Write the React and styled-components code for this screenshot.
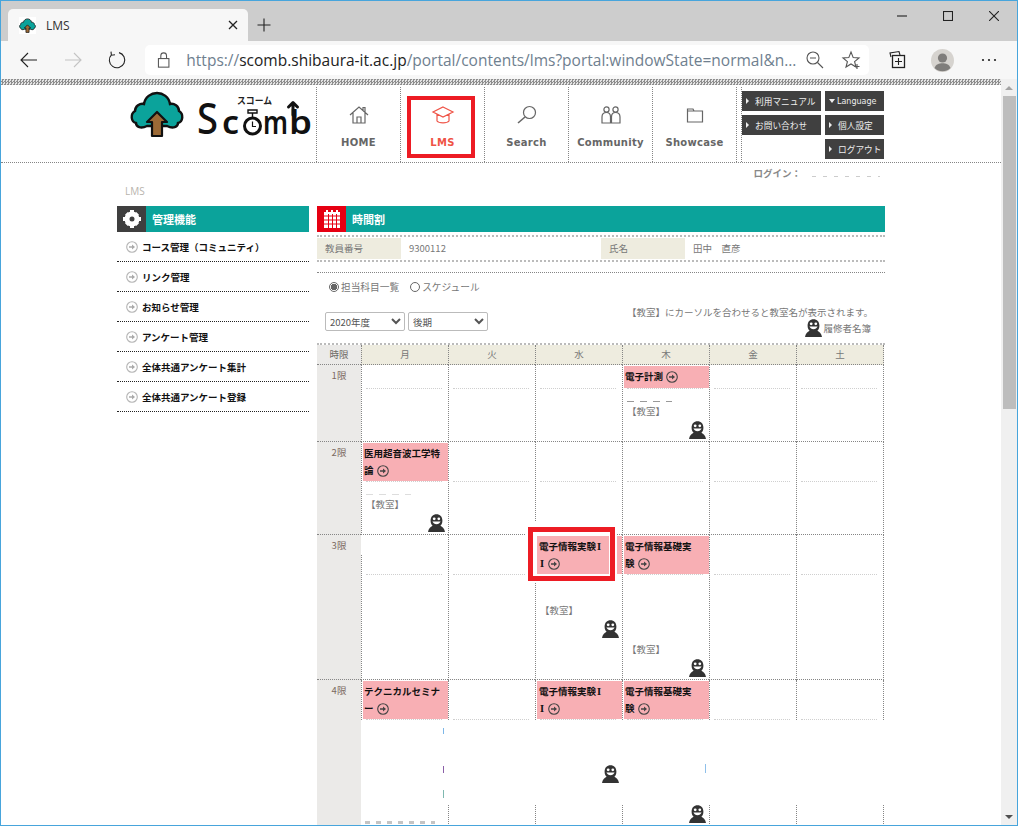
import React from "react";
import styled, { createGlobalStyle } from "styled-components";

const TEAL = "#0ba39b";
const JP = `"Noto Sans CJK JP", "Noto Sans", sans-serif`;
const GRID_LINE = "1px dotted #858585";

const GlobalStyle = createGlobalStyle`
  html, body {
    margin: 0;
    padding: 0;
    height: 100%;
    overflow: hidden;
    background: #fff;
    font-family: ${JP};
  }
`;

const Win = styled.div`
  box-sizing: border-box;
  width: 1018px;
  height: 826px;
  border: 1px solid #47a5dc;
  display: flex;
  flex-direction: column;
  overflow: hidden;
  background: #fff;
`;

/* browser chrome */
const TabStrip = styled.div`
  height: 40px;
  flex: none;
  background: #cdcdcd;
  display: flex;
  align-items: flex-end;
  padding-left: 7px;
`;

const Tab = styled.div`
  width: 240px;
  height: 32px;
  box-sizing: border-box;
  background: #f7f7f7;
  border-radius: 5px 5px 0 0;
  display: flex;
  align-items: center;
  padding: 0 10px 0 11px;
  font: 12px "Open Sans", "Noto Sans", sans-serif;
  color: #333;
`;

const TabTitle = styled.span`
  flex: 1;
  margin-left: 10px;
`;

const NewTab = styled.div`
  width: 30px;
  height: 32px;
  margin-left: 1px;
  display: flex;
  align-items: center;
  justify-content: center;
`;

const WinControls = styled.div`
  margin-left: auto;
  align-self: stretch;
  display: flex;
`;

const WinButton = styled.div`
  width: 46px;
  height: 29px;
  display: flex;
  align-items: center;
  justify-content: center;
`;

const Toolbar = styled.div`
  height: 38px;
  flex: none;
  box-sizing: border-box;
  background: #f7f7f7;
  display: flex;
  align-items: center;
  padding: 0 7px 0 6px;
`;

const ToolButton = styled.div`
  width: 44px;
  height: 30px;
  flex: none;
  display: flex;
  align-items: center;
  justify-content: center;
`;

const MoreDots = styled.svg`
  display: block;
  margin-left: 6px;
`;

const AddressBar = styled.div`
  width: 724px;
  height: 30px;
  flex: none;
  margin-left: 6px;
  margin-right: 7px;
  background: #fff;
  border-radius: 5px;
  display: flex;
  align-items: center;
  padding-left: 12px;
  box-sizing: border-box;
`;

const Url = styled.div`
  width: 641px;
  margin-left: 16px;
  font: 15.5px "Open Sans", "Noto Sans", sans-serif;
  color: #6f7f8f;
  white-space: nowrap;
  overflow: hidden;

  b {
    font-weight: 400;
    color: #222;
  }
`;

const AddressIcon = styled.div`
  width: 36px;
  flex: none;
  display: flex;
  justify-content: center;
  align-items: center;
`;

const Viewport = styled.div`
  flex: 1;
  min-height: 0;
  display: flex;
`;

const Main = styled.div`
  width: 1000px;
  flex: none;
  overflow: hidden;
`;

const Scrollbar = styled.div`
  width: 16px;
  flex: none;
  background: #f0f0f0;
  display: flex;
  flex-direction: column;
  align-items: center;
`;

const ScrollArrow = styled.div`
  height: 17px;
  flex: none;
  display: flex;
  align-items: center;
  justify-content: center;
  font-size: 0;
  &::before {
    content: "";
    border-left: 4px solid transparent;
    border-right: 4px solid transparent;
    ${(p) => (p.$down ? "border-top: 4px solid #505050;" : "border-bottom: 4px solid #a3a3a3;")}
  }
`;

const ScrollThumb = styled.div`
  width: 13px;
  height: 313px;
  background: #bdbdbd;
  margin-bottom: auto;
`;

/* site header */
const DotStrip = styled.div`
  height: 6px;
  background: repeating-conic-gradient(#8e8e8e 0 25%, #e4e4e4 0 50%) 0 0 / 3px 3px;
`;

const SiteHeader = styled.header`
  height: 78px;
  padding-top: 2px;
  box-sizing: border-box;
  border-bottom: ${GRID_LINE};
`;

const Inner = styled.div`
  width: 768px;
  margin: 0 auto;
`;

const HeaderRow = styled(Inner)`
  height: 75px;
  display: flex;
`;

const LogoBox = styled.div`
  width: 199px;
  flex: none;
  padding: 2px 0 0 13px;
  box-sizing: border-box;
`;

const NavCell = styled.div`
  width: 84px;
  flex: none;
  box-sizing: border-box;
  border-left: ${GRID_LINE};
  position: relative;
  display: flex;
  flex-direction: column;
  align-items: center;
  padding-top: 16px;
`;

const NavLabel = styled.div`
  margin-top: 10px;
  font: bold 10px "DejaVu Sans", sans-serif;
  letter-spacing: 0.3px;
  color: ${(p) => (p.$active ? "#ef5346" : "#666")};
`;

const Callout = styled.div`
  position: absolute;
  left: 6px;
  top: 9px;
  width: 68px;
  height: 62px;
  box-sizing: border-box;
  border: 4px solid #ed1c24;
`;

const Gap = styled.div`
  width: 5px;
  flex: none;
  box-sizing: border-box;
  border-left: ${GRID_LINE};
`;

const LinkPanel = styled.div`
  flex: 1;
  box-sizing: border-box;
  border-left: ${GRID_LINE};
  display: grid;
  grid-template-columns: 79px 59px;
  grid-auto-rows: 20px;
  column-gap: 4px;
  row-gap: 4px;
  padding-top: 4px;
`;

const LinkButton = styled.div`
  grid-column: ${(p) => p.$col};
  background: #404040;
  color: #eee;
  display: flex;
  align-items: center;
  padding-left: 4px;
  font: ${(p) => (p.$latin ? `8px "DejaVu Sans", sans-serif` : `8.7px ${JP}`)};
  white-space: nowrap;
  overflow: hidden;

  &::before {
    content: "";
    flex: none;
    margin-right: ${(p) => (p.$down ? "2px" : "6px")};
    ${(p) =>
      p.$down
        ? "border-left: 3px solid transparent; border-right: 3px solid transparent; border-top: 4px solid #eee;"
        : "border-top: 3px solid transparent; border-bottom: 3px solid transparent; border-left: 3px solid #eee;"}
  }
`;

const LoginRow = styled(Inner)`
  height: 20px;
  display: flex;
  align-items: center;
  justify-content: flex-end;
  padding-right: 5px;
  box-sizing: border-box;
`;

const LoginLabel = styled.span`
  font: bold 9.5px ${JP};
  color: #888;
`;

const LoginScrap = styled.span`
  width: 68px;
  height: 1px;
  margin: 6px 0 0 11px;
  background: repeating-linear-gradient(90deg, #ccc 0 4px, #fff 4px 11px);
`;

const Crumb = styled(Inner)`
  height: 16px;
  padding-left: 8px;
  box-sizing: border-box;
  font: 10px/16px "Open Sans", sans-serif;
  color: #b8b4ae;
`;

const Columns = styled(Inner)`
  display: flex;
  gap: 8px;
  margin-top: 7px;
`;

/* left menu */
const Sidebar = styled.aside`
  width: 192px;
  flex: none;
`;

const TitleBar = styled.div`
  height: 26px;
  background: ${TEAL};
  display: flex;
  align-items: center;
  color: #fff;
  font: bold 11px ${JP};
`;

const TitleIcon = styled.div`
  width: 29px;
  height: 26px;
  flex: none;
  margin-right: 6px;
  background: ${(p) => p.$bg};
  display: flex;
  align-items: center;
  justify-content: center;
`;

const MenuItem = styled.div`
  height: 30px;
  box-sizing: border-box;
  border-bottom: 1px dotted #222;
  display: flex;
  align-items: center;
  padding-left: 9px;
  gap: 4px;
  font: bold 9.5px ${JP};
  color: #111;
  white-space: nowrap;
`;

/* main panel */
const Content = styled.section`
  width: 568px;
  flex: none;
`;

const InfoTable = styled.div`
  margin-top: 3px;
  border-top: 2px dotted #bbb;
  border-bottom: 2px dotted #bbb;
  padding: 1px 0;
  display: grid;
  grid-template-columns: 84px 200px 84px 1fr;
  height: 21px;
  box-sizing: content-box;
`;

const InfoLabel = styled.div`
  background: #eeecdf;
  padding-left: 8px;
  font: 9.5px/21px ${JP};
  color: #777;
`;

const InfoValue = styled.div`
  padding-left: 8px;
  font: 9.5px/21px ${JP};
  color: #777;
`;

const ThinRule = styled.div`
  margin-top: 10px;
  border-top: 1px dotted #858585;
`;

const RadioRow = styled.div`
  margin-top: 7px;
  height: 14px;
  padding-left: 12px;
  display: flex;
  align-items: center;
  font: 9.7px ${JP};
  color: #777;
`;

const Radio = styled.span`
  width: 10px;
  height: 10px;
  flex: none;
  box-sizing: border-box;
  border-radius: 50%;
  border: 1px solid #666;
  margin-right: 2px;
  margin-left: ${(p) => (p.$second ? "11px" : "0")};
  background: ${(p) => (p.$on ? "radial-gradient(circle, #666 0 3px, #fff 3.4px)" : "#fff")};
`;

const ControlRow = styled.div`
  margin-top: 11px;
  height: 38px;
  display: flex;
  justify-content: space-between;
`;

const Selects = styled.div`
  padding: 7px 0 0 8px;
  display: flex;
  gap: 3px;
`;

const Select = styled.select`
  width: ${(p) => p.$w}px;
  height: 19px;
  box-sizing: border-box;
  border: 1px solid #bbb;
  border-radius: 2px;
  background: #fff;
  color: #555;
  font: 9.5px ${JP};
  padding: 0;
`;

const Notes = styled.div`
  padding-right: 12px;
  display: flex;
  flex-direction: column;
  align-items: flex-end;
  font: 9.5px/14px ${JP};
  color: #777;
`;

const RosterLink = styled.div`
  display: flex;
  align-items: center;
  gap: 1px;
  height: 18px;
  padding-right: 2px;
`;

const Timetable = styled.div`
  position: relative;
  isolation: isolate;
  border-top: 2px dotted #bbb;
  display: grid;
  grid-template-columns: 44px repeat(5, 87px) 88px;
  grid-template-rows: 20px 77px 93px 145px 200px;
  height: 535px;
  font: 9.5px ${JP};
`;

const CornerCell = styled.div`
  background: #ebeae8;
  border-bottom: ${GRID_LINE};
  line-height: 19px;
  text-align: center;
  color: #6d6a66;
`;

const DayCell = styled.div`
  background: #eeecdf;
  border-left: ${GRID_LINE};
  border-bottom: ${GRID_LINE};
  ${(p) => p.$last && `border-right: ${GRID_LINE};`}
  line-height: 19px;
  text-align: center;
  color: #777;
`;

const PeriodCell = styled.div`
  background: #ebeae8;
  border-bottom: ${GRID_LINE};
  padding-top: 3px;
  line-height: 14px;
  text-align: center;
  color: #7b6a62;
`;

const SlotCell = styled.div`
  position: relative;
  display: flex;
  flex-direction: column;
  min-width: 0;
  border-left: ${GRID_LINE};
  border-bottom: ${GRID_LINE};
  ${(p) => p.$last && `border-right: ${GRID_LINE};`}
`;

const Head = styled.div`
  height: ${(p) => p.$h}px;
  flex: none;
  margin: 1px 0 0 1px;
  width: 85px;
`;

const Course = styled.div`
  height: 100%;
  box-sizing: border-box;
  background: #f8afb4;
  padding: 2px 0 0 ${(p) => p.$pad}px;
  font-weight: bold;
  line-height: 17px;
  color: #111;
  white-space: nowrap;

  svg {
    vertical-align: -2.5px;
    margin-left: 3px;
  }
`;

const RomanOne = styled.span`
  font: bold 10.5px "Liberation Serif", serif;
  padding: 0 1px;
`;

const Rule = styled.div`
  width: 76px;
  flex: none;
  margin-left: 4px;
  border-top: 1px dotted #cfcfcf;
`;

const Scrap = styled.i`
  display: block;
  width: 45px;
  height: 1px;
  margin: 12px 0 2px 4px;
  background: repeating-linear-gradient(90deg, ${(p) => p.$c} 0 7px, #fff 7px 13px);
`;

const Room = styled.div`
  margin-top: ${(p) => p.$top}px;
  margin-left: 4px;
  line-height: 14px;
  color: #777;
`;

const PersonMark = styled.svg`
  display: block;
  flex: none;
  position: relative;
  z-index: 2;
`;

const PersonSlot = styled.div`
  position: relative;
  z-index: 2;
  align-self: flex-end;
  margin: ${(p) => p.$top}px 3px 0 0;
`;

const Blot = styled.div`
  position: absolute;
  z-index: 1;
  left: ${(p) => p.$x}px;
  top: ${(p) => p.$y}px;
  width: ${(p) => p.$w}px;
  height: ${(p) => p.$h}px;
  background: ${(p) => p.$c || "#fff"};
`;

const RedBox = styled.div`
  position: absolute;
  z-index: 3;
  left: -8px;
  top: -8px;
  width: 87px;
  height: 54px;
  box-sizing: border-box;
  border: 5px solid #ed1c24;
  box-shadow: 0 0 0 2px #fff, 0 -5px 0 #fff, inset 4px 4px 0 #fff, inset -1px -2px 0 #fff;
`;

/* icons */
const TreeShapes = () => (
  <>
    <path
      d="M17 37C11 40 6 38 6 34C1 33 0 25 5 22C5 17 10 14 14 15C15 8 21 4 27 4C33 4 39 8 40 15C44 14 49 17 49 22C54 25 53 33 48 34C48 38 43 40 37 37Z"
      fill={TEAL}
      stroke="#111"
      strokeWidth="2.4"
    />
    <path d="M27 23L37 33H32V47H22V33H17Z" fill="#9c6a36" stroke="#111" strokeWidth="2.2" strokeLinejoin="round" />
  </>
);

const Favicon = () => (
  <svg width="17" height="17" viewBox="0 0 54 50" style={{ display: "block", background: "#fff" }}>
    <TreeShapes />
  </svg>
);

const Logo = () => (
  <svg width="185" height="50" viewBox="0 0 185 50" style={{ display: "block" }}>
    <TreeShapes />
    <text x="107" y="15" fontSize="9" fontWeight="700" fontFamily={JP} fill="#222" textLength="35" lengthAdjust="spacingAndGlyphs">
      スコーム
    </text>
    <g fill="#111" fontFamily='"Noto Sans", sans-serif'>
      <text x="67" y="45" fontSize="44" fontWeight="500" textLength="21" lengthAdjust="spacingAndGlyphs">S</text>
      <text x="92" y="45" fontSize="32" fontWeight="600" textLength="17" lengthAdjust="spacingAndGlyphs">c</text>
      <text x="133" y="45" fontSize="32" fontWeight="600" textLength="25" lengthAdjust="spacingAndGlyphs">m</text>
      <text x="159" y="45" fontSize="32" fontWeight="600" textLength="23" lengthAdjust="spacingAndGlyphs">b</text>
    </g>
    <g fill="none" stroke="#111">
      <circle cx="122.5" cy="37" r="8" strokeWidth="3" />
      <path d="M118 21H127V24H118ZM122.5 24V28" strokeWidth="1.4" />
      <path d="M122.5 32.5V37.5H126" strokeWidth="1.2" />
      <path d="M163 26V14M158.5 18L163 13.5L167.5 18" strokeWidth="3" strokeLinecap="round" strokeLinejoin="round" />
    </g>
  </svg>
);

const NavIcon = ({ color = "#666", children }) => (
  <svg width="24" height="24" viewBox="0 0 24 24" fill="none" stroke={color} strokeWidth="1.2" style={{ display: "block" }}>
    {children}
  </svg>
);

const ArrowCircle = ({ dark }) => (
  <svg width="12" height="12" viewBox="0 0 12 12" style={{ flex: "none" }}>
    <circle cx="6" cy="6" r="5.3" fill={dark ? "none" : "#fff"} stroke={dark ? "#444" : "#b5b5b5"} strokeWidth="1.1" />
    <path d="M3 5.2H6V3.4L9 6L6 8.6V6.8H3Z" fill={dark ? "#444" : "#aaa"} />
  </svg>
);

const Person = () => (
  <PersonMark width="17" height="18" viewBox="0 0 17 18">
    <path d="M0 18C0.5 14.5 2.5 12.8 4.6 11.8C3.2 10.6 2.6 8.8 2.6 6.5C2.6 2.6 5 0.2 8.5 0.2C12 0.2 14.4 2.6 14.4 6.5C14.4 8.8 13.8 10.6 12.4 11.8C14.5 12.8 16.5 14.5 17 18Z" fill="#333" />
    <circle cx="6.2" cy="4.8" r="1.4" fill="#fff" />
    <circle cx="10.8" cy="4.8" r="1.4" fill="#fff" />
    <path d="M4.4 7.6C5.6 11 11.4 11 12.6 7.6Z" fill="#fff" />
  </PersonMark>
);

const ChromeIcon = ({ w = 20, h = 20, color = "#222", children }) => (
  <svg width={w} height={h} viewBox={`0 0 ${w} ${h}`} fill="none" stroke={color} strokeWidth="1.1" style={{ display: "block" }}>
    {children}
  </svg>
);

const MENU = [
  "コース管理（コミュニティ）",
  "リンク管理",
  "お知らせ管理",
  "アンケート管理",
  "全体共通アンケート集計",
  "全体共通アンケート登録",
];

const DAYS = ["月", "火", "水", "木", "金", "土"];

// slots by row, keyed by day index
const ROWS = [
  {
    label: "1限",
    head: 22,
    slots: { 3: { lines: ["電子計測"], top: 0, scrap: "#999" } },
  },
  {
    label: "2限",
    head: 38,
    slots: { 0: { lines: ["医用超音波工学特", "論"], top: 0, scrap: "#ddd" } },
  },
  {
    label: "3限",
    head: 38,
    slots: {
      2: { lines: ["電子情報実験|", "|"], top: 28, pad: 2, marked: true },
      3: { lines: ["電子情報基礎実", "験"], top: 67 },
    },
  },
  {
    label: "4限",
    head: 38,
    slots: {
      0: { lines: ["テクニカルセミナ", "ー"] },
      2: { lines: ["電子情報実験|", "|"], personTop: 45, pad: 2 },
      3: { lines: ["電子情報基礎実", "験"], personTop: 85 },
    },
  },
];

// "|" in a course line stands for the roman numeral stroke
const courseLine = (line) =>
  line.split("|").map((part, i) => (
    <React.Fragment key={i}>
      {i > 0 && <RomanOne>I</RomanOne>}
      {part}
    </React.Fragment>
  ));

const Slot = ({ slot, head, last }) => (
  <SlotCell $last={last}>
    <Head $h={head}>
      {slot && (
        <Course $pad={slot.pad || 1}>
          {slot.lines.map((line, i) => (
            <React.Fragment key={i}>
              {i > 0 && <br />}
              {courseLine(line)}
              {i === slot.lines.length - 1 && <ArrowCircle dark />}
            </React.Fragment>
          ))}
        </Course>
      )}
    </Head>
    <Rule />
    {slot && slot.scrap && <Scrap $c={slot.scrap} />}
    {slot && slot.top !== undefined && (
      <>
        <Room $top={slot.scrap ? 0 : slot.top}>【教室】</Room>
        <PersonSlot $top={3}>
          <Person />
        </PersonSlot>
      </>
    )}
    {slot && slot.personTop && (
      <PersonSlot $top={slot.personTop}>
        <Person />
      </PersonSlot>
    )}
    {slot && slot.marked && <RedBox />}
  </SlotCell>
);

const App = () => {
  return (
    <Win>
      <GlobalStyle />
      <TabStrip>
        <Tab>
          <Favicon />
          <TabTitle>LMS</TabTitle>
          <ChromeIcon w={10} h={10}>
            <path d="M1 1L9 9M9 1L1 9" strokeWidth="1.3" />
          </ChromeIcon>
        </Tab>
        <NewTab>
          <ChromeIcon w={14} h={14}>
            <path d="M7 0.5V13.5M0.5 7H13.5" />
          </ChromeIcon>
        </NewTab>
        <WinControls>
          <WinButton>
            <ChromeIcon w={10} h={10}>
              <path d="M0 5H10" />
            </ChromeIcon>
          </WinButton>
          <WinButton>
            <ChromeIcon w={10} h={10}>
              <rect x="0.5" y="0.5" width="9" height="9" />
            </ChromeIcon>
          </WinButton>
          <WinButton>
            <ChromeIcon w={10} h={10}>
              <path d="M0 0L10 10M10 0L0 10" />
            </ChromeIcon>
          </WinButton>
        </WinControls>
      </TabStrip>

      <Toolbar>
        <ToolButton>
          <ChromeIcon>
            <path d="M2 10H18M9 3L2 10L9 17" />
          </ChromeIcon>
        </ToolButton>
        <ToolButton>
          <ChromeIcon color="#c4c4c4">
            <path d="M2 10H18M11 3L18 10L11 17" />
          </ChromeIcon>
        </ToolButton>
        <ToolButton>
          <ChromeIcon>
            <path d="M12 2.6A7.7 7.7 0 1 1 4.6 4.6M4 1.6L4.4 5.2L8 4.8" />
          </ChromeIcon>
        </ToolButton>
        <AddressBar>
          <ChromeIcon w={14} h={18} color="#555">
            <rect x="1.5" y="7.5" width="11" height="9" />
            <path d="M4 7.5V4.5A3 3 0 0 1 10 4.5V7.5" />
          </ChromeIcon>
          <Url>
            https://<b>scomb.shibaura-it.ac.jp</b>/portal/contents/lms?portal:windowState=normal&amp;n...
          </Url>
          <AddressIcon>
            <ChromeIcon color="#555">
              <circle cx="8" cy="8" r="6" />
              <path d="M5 8H11M12.5 12.5L18 18" />
            </ChromeIcon>
          </AddressIcon>
          <AddressIcon>
            <ChromeIcon color="#555">
              <path d="M10 2L12.2 7.6L18 8L13.6 11.6L15 17L10 14L5 17L6.4 11.6L2 8L7.8 7.6Z" />
              <path d="M16 14V19M13.5 16.5H18.5" />
            </ChromeIcon>
          </AddressIcon>
        </AddressBar>
        <ToolButton>
          <ChromeIcon>
            <path d="M3 7L2 3L11 1.5L12 5" />
            <rect x="4.5" y="5.5" width="12" height="12" fill="#f7f7f7" strokeWidth="1.3" />
            <path d="M10.5 8V15M7 11.5H14" />
          </ChromeIcon>
        </ToolButton>
        <ToolButton>
          <svg width="23" height="23" viewBox="0 0 23 23" style={{ display: "block" }}>
            <circle cx="11.5" cy="11.5" r="11.5" fill="#d6d3cf" />
            <circle cx="11.5" cy="9" r="4.6" fill="#7f7d7b" />
            <path d="M3.5 19C5 15 8 14.2 11.5 14.2C15 14.2 18 15 19.5 19A11.5 11.5 0 0 1 3.5 19Z" fill="#7f7d7b" />
          </svg>
        </ToolButton>
        <ToolButton>
          <MoreDots width="16" height="4" viewBox="0 0 16 4">
            <circle cx="2" cy="2" r="1.1" fill="#222" />
            <circle cx="8" cy="2" r="1.1" fill="#222" />
            <circle cx="14" cy="2" r="1.1" fill="#222" />
          </MoreDots>
        </ToolButton>
      </Toolbar>

      <Viewport>
        <Main>
          <DotStrip />
          <SiteHeader>
            <HeaderRow>
              <LogoBox>
                <Logo />
              </LogoBox>
              <NavCell>
                <NavIcon>
                  <path d="M3 12L12 4L21 12M6 10V20H18V10M10 20V14H14V20M16 7V4.5H18V9" />
                </NavIcon>
                <NavLabel>HOME</NavLabel>
              </NavCell>
              <NavCell>
                <NavIcon color="#ef5346">
                  <path d="M12 4L22 9L12 14L2 9ZM6 11.5V18C8 20.5 16 20.5 18 18V11.5" />
                </NavIcon>
                <NavLabel $active>LMS</NavLabel>
                <Callout />
              </NavCell>
              <NavCell>
                <NavIcon>
                  <circle cx="14.5" cy="9.5" r="6" />
                  <path d="M10 14L3 20" strokeWidth="1.6" />
                </NavIcon>
                <NavLabel>Search</NavLabel>
              </NavCell>
              <NavCell>
                <NavIcon>
                  <circle cx="7.5" cy="6.5" r="2.6" />
                  <circle cx="16.5" cy="6.5" r="2.6" />
                  <path d="M3 20V14C3 11 5 9.5 7.5 9.5C10 9.5 11.5 11 11.5 14V20ZM12.5 20V14C12.5 11 14 9.5 16.5 9.5C19 9.5 21 11 21 14V20Z" />
                </NavIcon>
                <NavLabel>Community</NavLabel>
              </NavCell>
              <NavCell>
                <NavIcon>
                  <path d="M4.5 19V6H10L11 8H19.5V19ZM4.5 8H11" />
                </NavIcon>
                <NavLabel>Showcase</NavLabel>
              </NavCell>
              <Gap />
              <LinkPanel>
                <LinkButton $col={1}>利用マニュアル</LinkButton>
                <LinkButton $col={2} $latin $down>Language</LinkButton>
                <LinkButton $col={1}>お問い合わせ</LinkButton>
                <LinkButton $col={2}>個人設定</LinkButton>
                <LinkButton $col={2}>ログアウト</LinkButton>
              </LinkPanel>
            </HeaderRow>
          </SiteHeader>

          <LoginRow>
            <LoginLabel>ログイン：</LoginLabel>
            <LoginScrap />
          </LoginRow>
          <Crumb>LMS</Crumb>

          <Columns>
            <Sidebar>
              <TitleBar>
                <TitleIcon $bg="#3f3f3f">
                  <svg width="20" height="20" viewBox="0 0 20 20" style={{ display: "block" }}>
                    <circle cx="10" cy="10" r="5" fill="none" stroke="#fff" strokeWidth="5" />
                    <path d="M8 1H12V4H8ZM8 16H12V19H8ZM1 8H4V12H1ZM16 8H19V12H16Z" fill="#fff" />
                    <path d="M3 5.8L5.8 3L8 5L5 8ZM14.2 3L17 5.8L15 8L12 5ZM3 14.2L5 12L8 15L5.8 17ZM15 12L17 14.2L14.2 17L12 15Z" fill="#fff" />
                  </svg>
                </TitleIcon>
                管理機能
              </TitleBar>
              {MENU.map((item) => (
                <MenuItem key={item}>
                  <ArrowCircle />
                  {item}
                </MenuItem>
              ))}
            </Sidebar>

            <Content>
              <TitleBar>
                <TitleIcon $bg="#e60012">
                  <svg width="18" height="20" viewBox="0 0 18 20" style={{ display: "block" }}>
                    <path d="M1 3H17V19H1Z" fill="#fff" />
                    <path d="M4 1V4M9 1V4M14 1V4" stroke="#fff" strokeWidth="2" />
                    <path d="M1 7H17M1 11H17M1 15H17M5.5 5V19M9.5 5V19M13.5 5V19" stroke="#e60012" strokeWidth="1" />
                  </svg>
                </TitleIcon>
                時間割
              </TitleBar>

              <InfoTable>
                <InfoLabel>教員番号</InfoLabel>
                <InfoValue>9300112</InfoValue>
                <InfoLabel>氏名</InfoLabel>
                <InfoValue>田中　直彦</InfoValue>
              </InfoTable>
              <ThinRule />

              <RadioRow>
                <Radio $on />
                担当科目一覧
                <Radio $second />
                スケジュール
              </RadioRow>

              <ControlRow>
                <Selects>
                  <Select $w={80} defaultValue="2020">
                    <option value="2020">2020年度</option>
                  </Select>
                  <Select $w={80} defaultValue="late">
                    <option value="late">後期</option>
                  </Select>
                </Selects>
                <Notes>
                  <div>【教室】にカーソルを合わせると教室名が表示されます。</div>
                  <RosterLink>
                    <Person />
                    履修者名簿
                  </RosterLink>
                </Notes>
              </ControlRow>

              <Timetable>
                <CornerCell>時限</CornerCell>
                {DAYS.map((day, i) => (
                  <DayCell key={day} $last={i === 5}>
                    {day}
                  </DayCell>
                ))}
                {ROWS.map((row) => (
                  <React.Fragment key={row.label}>
                    <PeriodCell>{row.label}</PeriodCell>
                    {DAYS.map((day, i) => (
                      <Slot key={day} slot={row.slots[i]} head={row.head} last={i === 5} />
                    ))}
                  </React.Fragment>
                ))}
                {/* blanked-out areas of the original capture */}
                <Blot $x={44} $y={190} $w={2} $h={20} />
                <Blot $x={44} $y={376} $w={524} $h={84} />
                <Blot $x={44} $y={460} $w={85} $h={30} />
                <Blot $x={126} $y={383} $w={1} $h={6} $c="#7db7e8" />
                <Blot $x={126} $y={421} $w={1} $h={7} $c="#8a5fa8" />
                <Blot $x={126} $y={445} $w={1} $h={8} $c="#7fb8b0" />
                <Blot $x={388} $y={419} $w={1} $h={9} $c="#8fc0ea" />
                <Blot $x={48} $y={476} $w={70} $h={3} $c="repeating-linear-gradient(90deg, #c4c4c4 0 5px, #fff 5px 11px)" />
              </Timetable>
            </Content>
          </Columns>
        </Main>
        <Scrollbar>
          <ScrollArrow />
          <ScrollThumb />
          <ScrollArrow $down />
        </Scrollbar>
      </Viewport>
    </Win>
  );
};

export default App;
